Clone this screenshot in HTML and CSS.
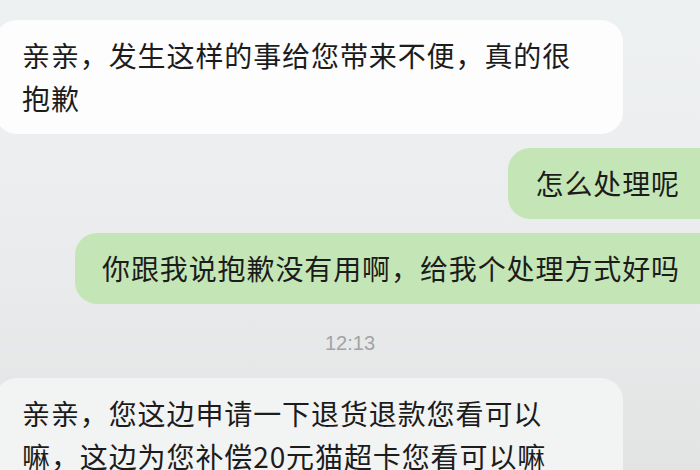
FILE: index.html
```html
<!DOCTYPE html>
<html lang="zh-CN">
<head>
  <meta charset="UTF-8" />
  <meta name="viewport" content="width=device-width, initial-scale=1.0" />
  <title>聊天记录</title>
  <link rel="stylesheet" href="styles.css">
</head>
<body>
  <div class="chat">
    <div class="msg msg-in">亲亲，发生这样的事给您带来不便，真的很抱歉</div>
    <div class="msg msg-out">怎么处理呢</div>
    <div class="msg msg-out">你跟我说抱歉没有用啊，给我个处理方式好吗</div>
    <div class="time">12:13</div>
    <div class="msg msg-in msg-faded">亲亲，您这边申请一下退货退款您看可以嘛，这边为您补偿20元猫超卡您看可以嘛</div>
  </div>
</body>
</html>
```

FILE: styles.css
```css
html, body {
  height: 100%;
}
body {
  margin: 0;
  overflow: hidden;
  font-family: "Noto Sans CJK SC", "Noto Sans", sans-serif;
  color: #1c1c1c;
  background: linear-gradient(#eef1f2, #ebeced 50%, #e2e3e3);
}
.chat {
  display: flex;
  flex-direction: column;
  padding-top: 20px;
}
.msg {
  box-sizing: border-box;
  width: fit-content;
  max-width: 628px;
  padding: 14px 27px;
  font-size: 28px;
  letter-spacing: 0.9px;
  line-height: 43px;
  border-radius: 22px;
}
.msg-in {
  margin-left: -5px;
  background-color: #fdfdfd;
  margin-bottom: 14px;
}
.msg-faded {
  background-color: #f2f3f3;
}
.msg-out {
  align-self: flex-end;
  margin-right: -27px;
  padding-right: 47px;
  max-width: none;
  background-color: #c4e6b6;
  margin-bottom: 14px;
}
.time {
  align-self: center;
  margin: 13px 0 23px;
  font-family: "Liberation Sans", sans-serif;
  font-size: 20px;
  line-height: 24px;
  color: #a2a4a5;
}
```
